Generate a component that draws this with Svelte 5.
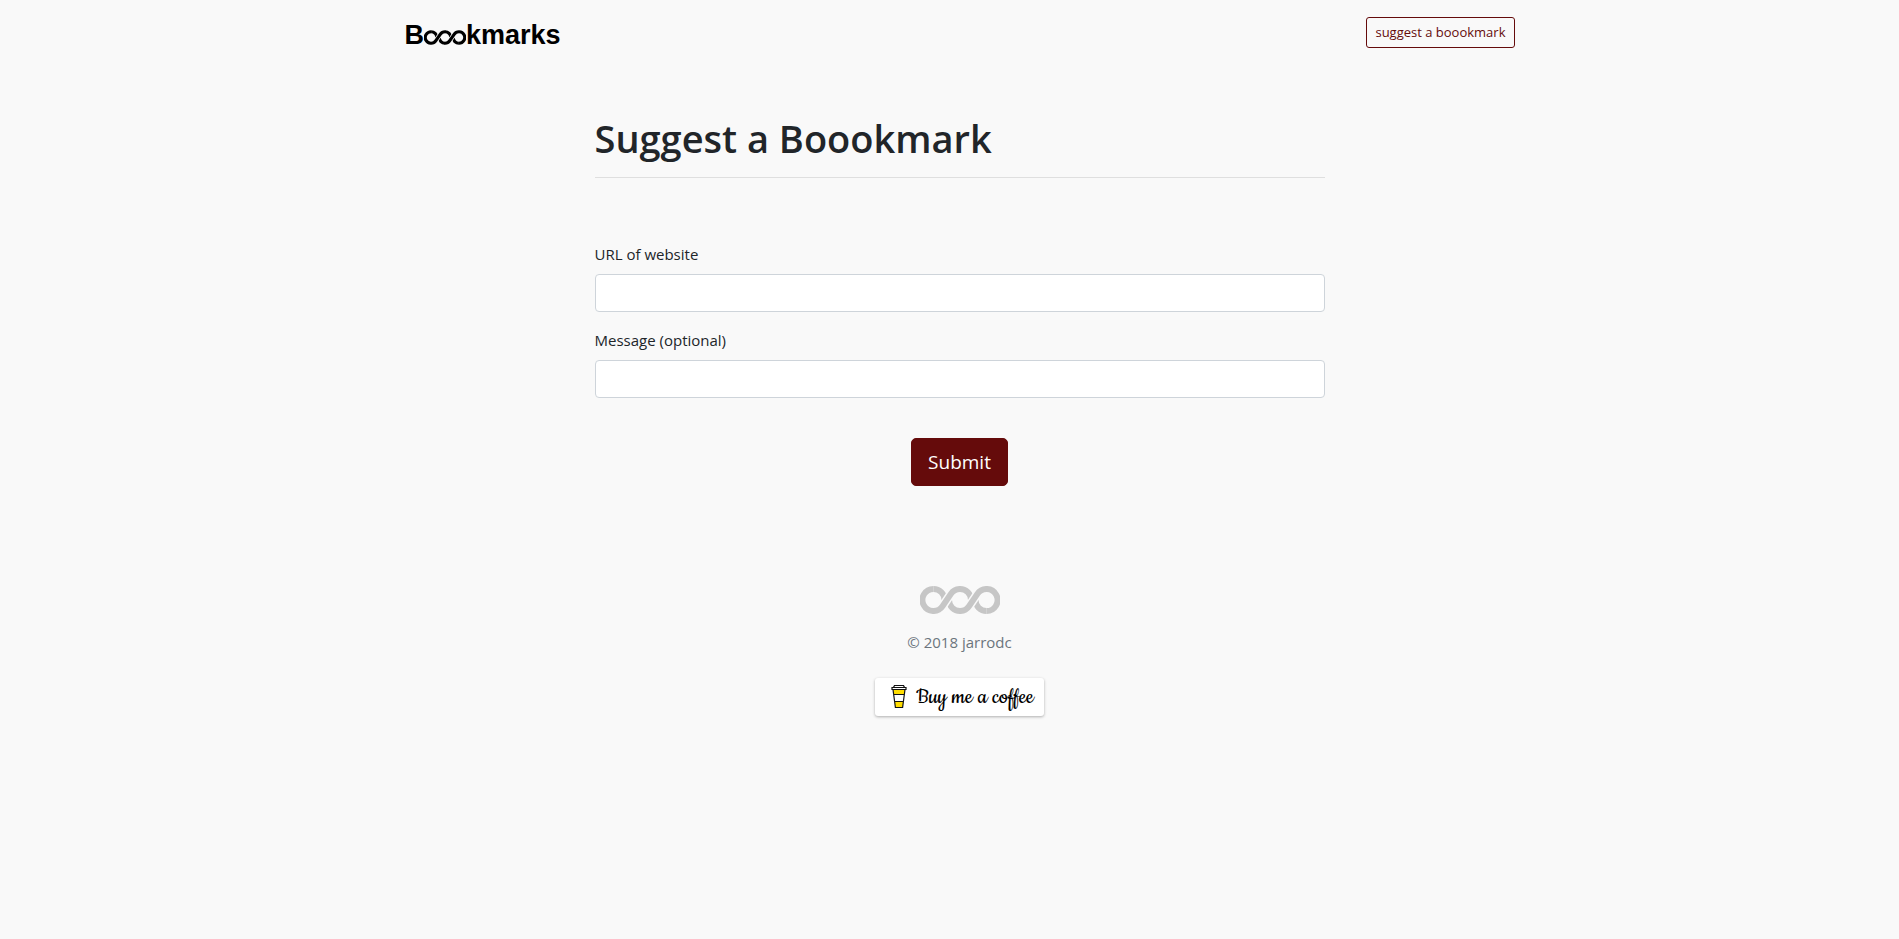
<script>
	let url = '';
	let message = '';
	const year = 2018;
</script>

{#snippet loops()}
	<!-- loop ends, trimmed by the gap lines, then the two joined strokes -->
	<path d="M13.5 3A11 11 0 0 1 24.5 14M40 25A11 11 0 0 1 29 14" />
	<path d="M40 3A11 11 0 0 1 51 14M66.5 25A11 11 0 0 1 55.5 14" />
	<path class="gap" d="M20 24L33.5 4M46.5 24L60 4" />
	<path d="M13.5 3A11 11 0 1 0 22.6 20.1L30.9 7.9A11 11 0 0 1 40.5 3" />
	<path d="M39.5 25A11 11 0 0 0 49.1 20.1L57.4 7.9A11 11 0 1 1 66.5 25" />
{/snippet}

<div class="page">
	<nav>
		<a class="brand" href="/" aria-label="Boookmarks">
			<span>B</span>
			<svg class="loops brand-loops" viewBox="0 0 80 28" aria-hidden="true">
				{@render loops()}
			</svg>
			<span>kmarks</span>
		</a>
		<a class="btn btn-outline" href="/suggest">suggest a boookmark</a>
	</nav>

	<main>
		<h1>Suggest a Boookmark</h1>
		<form on:submit|preventDefault>
			<div class="form-group">
				<label for="url">URL of website</label>
				<input id="url" type="text" bind:value={url} />
			</div>
			<div class="form-group">
				<label for="message">Message (optional)</label>
				<input id="message" type="text" bind:value={message} />
			</div>
			<button class="btn btn-submit" type="submit">Submit</button>
		</form>
	</main>

	<footer>
		<svg class="loops footer-loops" viewBox="0 0 80 28" aria-hidden="true">
			{@render loops()}
		</svg>
		<p>© {year} jarrodc</p>
		<a class="coffee" href="/coffee">
			<svg viewBox="0 0 16 24" aria-hidden="true">
				<path d="M3 .5h10l2 4H1z" fill="#fff" />
				<path d="M2 4.5h12l-.7 4.5H2.7zM3.6 16h8.800L11.600 22.500H4.400z" fill="#fd0" />
				<path d="M2.7 9h10.6l-.9 7H3.6z" fill="#fff" />
				<path
					d="M3.500 .5h9l1 2h-11zM1 2.500h14v2H1zM2 4.500l2.400 18h7.200l2.400-18M2.700 9.500h10.600M3.600 16.500h8.800"
					fill="none"
					stroke="#111"
					stroke-width="1.200"
				/>
			</svg>
			<span>Buy me a coffee</span>
		</a>
	</footer>
</div>

<style>
	:global(body) {
		background: #f9f9f9;
		color: #212529;
		font-family: 'Segoe UI', 'Open Sans', 'Noto Sans', sans-serif;
		font-size: 15px;
		line-height: 24px;
	}

	.page {
		padding-left: 20px;
	}

	nav {
		box-sizing: border-box;
		max-width: 1140px;
		margin: 0 auto;
		padding: 17px 15px;
		display: flex;
		align-items: flex-start;
		justify-content: space-between;
	}

	.brand {
		display: flex;
		align-items: center;
		padding-top: 2px;
		color: #000;
		font-family: 'Liberation Sans', Arial, sans-serif;
		font-size: 27px;
		font-weight: bold;
		line-height: 32px;
		text-decoration: none;
	}

	.loops {
		fill: none;
		stroke-width: 6;
	}

	.loops .gap {
		stroke: #f9f9f9;
		stroke-width: 9;
	}

	.brand-loops {
		width: 42px;
		height: 15px;
		margin-top: 4px;
		stroke: #000;
	}

	.btn {
		display: inline-block;
		border: 1px solid #650b0b;
		font-family: inherit;
		text-decoration: none;
		cursor: pointer;
	}

	.btn-outline {
		padding: 4px 8px;
		border-radius: 3px;
		color: #650b0b;
		font-size: 13px;
		line-height: 21px;
	}

	main {
		box-sizing: border-box;
		max-width: 760px;
		margin: 0 auto;
		padding: 45px 15px 0;
	}

	h1 {
		margin: 0 0 64px;
		padding-bottom: 14px;
		border-bottom: 1px solid #dfdfdf;
		font-size: 38px;
		font-weight: 600;
		line-height: 50px;
	}

	.form-group {
		margin-bottom: 16px;
	}

	label {
		display: block;
		margin-bottom: 8px;
	}

	input {
		display: block;
		box-sizing: border-box;
		width: 100%;
		height: 38px;
		padding: 6px 12px;
		border: 1px solid #ced4da;
		border-radius: 4px;
		background: #fff;
		color: #495057;
		font: inherit;
	}

	.btn-submit {
		display: block;
		margin: 40px auto 0;
		padding: 8px 16px;
		border-radius: 5px;
		background: #650b0b;
		color: #fff;
		font-size: 19px;
		line-height: 30px;
	}

	footer {
		display: flex;
		flex-direction: column;
		align-items: center;
		padding: 100px 0 48px;
		color: #6c757d;
	}

	.footer-loops {
		width: 80px;
		height: 28px;
		stroke: #c6c6c6;
	}

	footer p {
		margin: 16px 0 24px;
	}

	.coffee {
		display: flex;
		align-items: center;
		gap: 9px;
		padding: 0 10px 0 16px;
		border-radius: 3px;
		background: #fff;
		box-shadow: 0 1px 3px rgba(0, 0, 0, 0.3);
		color: #000;
		font-family: Cookie, cursive;
		font-size: 25px;
		line-height: 38px;
		text-decoration: none;
	}

	.coffee svg {
		width: 16px;
		height: 24px;
	}
</style>
